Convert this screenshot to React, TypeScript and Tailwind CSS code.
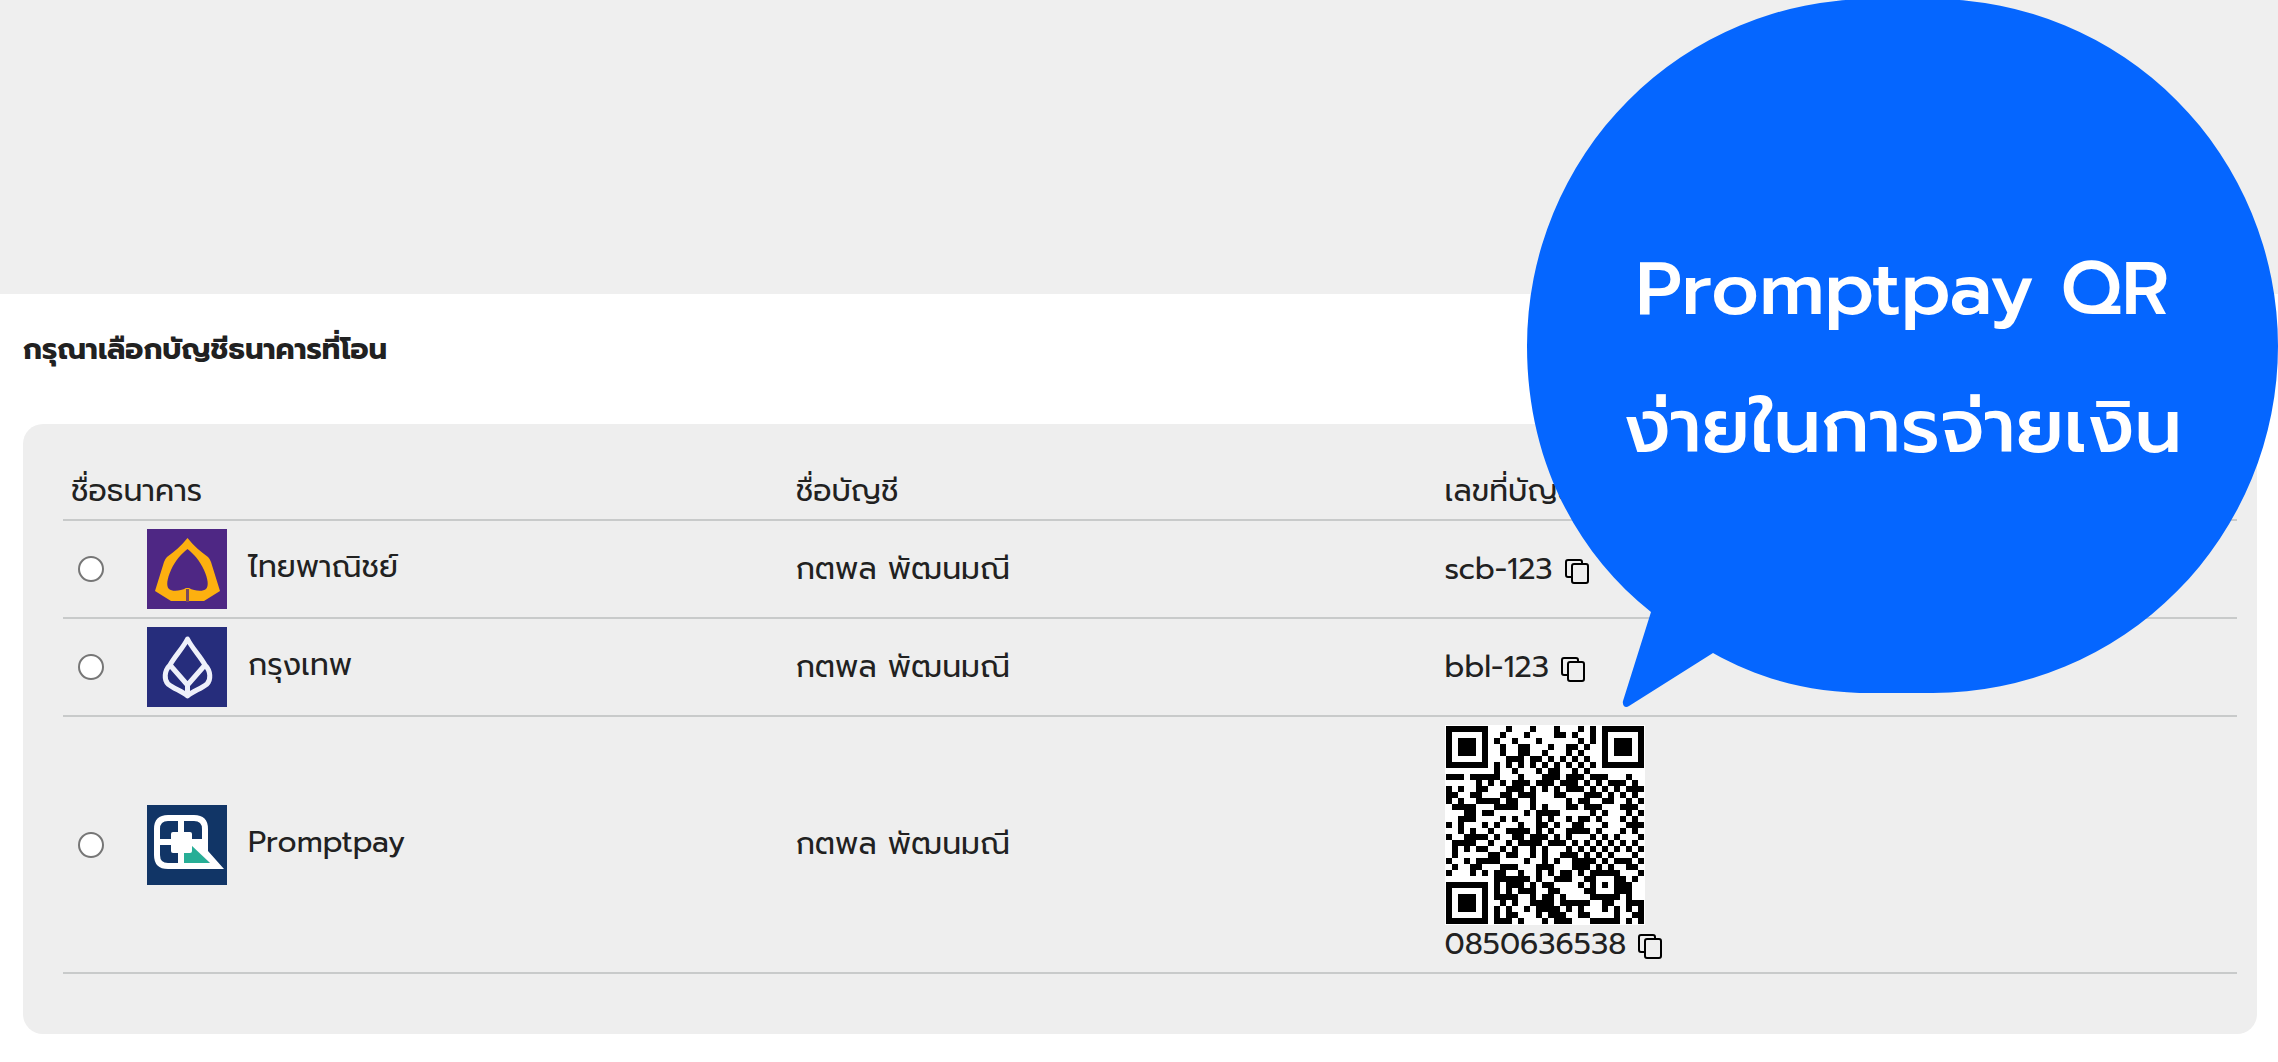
import type { ReactNode } from "react";

// ── PromptPay payload (EMVCo) ──
const crc16 = (text: string) => {
  let crc = 0xffff;
  for (const ch of text) {
    crc ^= ch.charCodeAt(0) << 8;
    for (let i = 0; i < 8; i++) {
      crc = crc & 0x8000 ? ((crc << 1) ^ 0x1021) & 0xffff : (crc << 1) & 0xffff;
    }
  }
  return crc.toString(16).toUpperCase().padStart(4, "0");
};

const promptpayPayload = (phone: string, amount: string) => {
  const target = "0066" + phone.slice(1);
  const size = String(amount.length).padStart(2, "0");
  const body = `00020101021229370016A0000006770101110113${target}5802TH530376454${size}${amount}6304`;
  return body + crc16(body);
};

// ── QR code, version 4-L, alphanumeric mode ──
const SIZE = 33;
const DATA_WORDS = 80;
const ECC_WORDS = 20;
const ALPHANUMERIC = "0123456789ABCDEFGHIJKLMNOPQRSTUVWXYZ $%*+-./:";

const gfMul = (a: number, b: number) => {
  let r = 0;
  for (let i = 7; i >= 0; i--) {
    r = (r << 1) ^ ((r >>> 7) * 0x11d);
    if ((b >>> i) & 1) r ^= a;
  }
  return r;
};

const eccFor = (data: number[]) => {
  const gen: number[] = new Array(ECC_WORDS).fill(0);
  gen[ECC_WORDS - 1] = 1;
  let root = 1;
  for (let i = 0; i < ECC_WORDS; i++) {
    for (let j = 0; j < ECC_WORDS; j++) {
      gen[j] = gfMul(gen[j], root);
      if (j + 1 < ECC_WORDS) gen[j] ^= gen[j + 1];
    }
    root = gfMul(root, 2);
  }
  const rem: number[] = new Array(ECC_WORDS).fill(0);
  for (const b of data) {
    const factor = b ^ rem.shift()!;
    rem.push(0);
    gen.forEach((g, i) => (rem[i] ^= gfMul(g, factor)));
  }
  return rem;
};

const makeQr = (text: string) => {
  const bits: number[] = [];
  const push = (value: number, len: number) => {
    for (let i = len - 1; i >= 0; i--) bits.push((value >>> i) & 1);
  };
  push(2, 4);
  push(text.length, 9);
  for (let i = 0; i < text.length; i += 2) {
    const a = ALPHANUMERIC.indexOf(text[i]);
    if (i + 1 < text.length) push(a * 45 + ALPHANUMERIC.indexOf(text[i + 1]), 11);
    else push(a, 6);
  }
  push(0, 4);
  while (bits.length % 8) bits.push(0);

  const data: number[] = [];
  for (let i = 0; i < bits.length; i += 8) {
    data.push(parseInt(bits.slice(i, i + 8).join(""), 2));
  }
  for (let pad = 0xec; data.length < DATA_WORDS; pad ^= 0xfd) data.push(pad);
  const words = [...data, ...eccFor(data)];

  const grid: number[][] = Array.from({ length: SIZE }, () => new Array(SIZE).fill(-1));

  // timing lines
  for (let i = 0; i < SIZE; i++) {
    grid[6][i] = grid[i][6] = i % 2 === 0 ? 1 : 0;
  }
  // finders with their separators
  for (const [cy, cx] of [[3, 3], [3, SIZE - 4], [SIZE - 4, 3]]) {
    for (let dy = -4; dy <= 4; dy++) {
      for (let dx = -4; dx <= 4; dx++) {
        const y = cy + dy;
        const x = cx + dx;
        if (y < 0 || x < 0 || y >= SIZE || x >= SIZE) continue;
        const d = Math.max(Math.abs(dx), Math.abs(dy));
        grid[y][x] = d === 2 || d === 4 ? 0 : 1;
      }
    }
  }
  // alignment
  for (let dy = -2; dy <= 2; dy++) {
    for (let dx = -2; dx <= 2; dx++) {
      grid[26 + dy][26 + dx] = Math.max(Math.abs(dx), Math.abs(dy)) === 1 ? 0 : 1;
    }
  }
  // format bits for level L, mask 0
  const format = 0b111011111000100;
  const f = (i: number) => (format >>> i) & 1;
  for (let i = 0; i <= 5; i++) grid[i][8] = f(i);
  grid[7][8] = f(6);
  grid[8][8] = f(7);
  grid[8][7] = f(8);
  for (let i = 9; i < 15; i++) grid[8][14 - i] = f(i);
  for (let i = 0; i < 8; i++) grid[8][SIZE - 1 - i] = f(i);
  for (let i = 8; i < 15; i++) grid[SIZE - 15 + i][8] = f(i);
  grid[SIZE - 8][8] = 1;

  // zigzag data
  let n = 0;
  for (let right = SIZE - 1; right >= 1; right -= 2) {
    if (right === 6) right = 5;
    for (let v = 0; v < SIZE; v++) {
      for (let j = 0; j < 2; j++) {
        const x = right - j;
        const y = ((right + 1) & 2) === 0 ? SIZE - 1 - v : v;
        if (grid[y][x] !== -1) continue;
        const bit = n < words.length * 8 ? (words[n >>> 3] >>> (7 - (n & 7))) & 1 : 0;
        grid[y][x] = (x + y) % 2 === 0 ? bit ^ 1 : bit;
        n++;
      }
    }
  }
  return grid;
};

const QrCode = ({ value }: { value: string }) => {
  const path = makeQr(value)
    .flatMap((row, y) => row.map((on, x) => (on ? `M${x * 6 + 1} ${y * 6 + 1}h6v6h-6z` : "")))
    .join("");
  return (
    <svg viewBox="0 0 200 200" className="block size-[200px]" role="img" aria-label="Promptpay QR">
      <rect width="200" height="200" fill="#fff" />
      <path d={path} fill="#000" shapeRendering="crispEdges" />
    </svg>
  );
};

// ── Logos ──
const ScbLogo = () => (
  <svg viewBox="0 0 80 80" className="size-20 shrink-0" aria-hidden="true">
    <rect width="80" height="80" fill="#4e2784" />
    <path
      fill="#fdb00f"
      fillRule="evenodd"
      d="M40.500 9C47 17 54 23 61 28Q63 30 64 33L73 62L57 72H24L8 62L17 33Q18 30 20 28C27 23 34 17 40.500 9ZM40.500 20C34 25 28 32 24 41C20 50 19 57 22 60C25 63 34 62 39 59H42C47 62 56 63 59 60C62 57 61 50 57 41C53 32 47 25 40.500 20Z"
    />
    <path d="M40.500 60V73" stroke="#7a4a5c" strokeWidth="3" />
  </svg>
);

const BblLogo = () => (
  <svg viewBox="0 0 80 80" className="size-20 shrink-0" aria-hidden="true">
    <rect width="80" height="80" fill="#262d7c" />
    <g fill="none" stroke="#eef0fa" strokeWidth="5" strokeLinejoin="round">
      <path d="M40.500 12C36 21 28 29 23 38C17 44 17 53 21 57C27 62 35 64 40.500 69C46 64 54 62 60 57C64 53 64 44 58 38C53 29 45 21 40.500 12Z" />
      <path d="M23 38L40.500 58L58 38M40.500 57V69" />
    </g>
  </svg>
);

const PromptpayLogo = () => (
  <svg viewBox="0 0 80 80" className="size-20 shrink-0" aria-hidden="true">
    <rect width="80" height="80" fill="#113566" />
    <path
      d="M58 36V24Q58 13 47 13H21Q10 13 10 24V50Q10 61 21 61H40"
      fill="none"
      stroke="#fff"
      strokeWidth="6"
    />
    <path d="M34 13V61M10 37H46" stroke="#fff" strokeWidth="6" />
    <path d="M37 40H45L63 58H37Z" fill="#27ae96" />
    <path d="M44 34H61V46L77 64H36V58H63L44 40Z" fill="#fff" />
    <rect x="24" y="27" width="21" height="21" rx="2" fill="#fff" />
  </svg>
);

const CopyIcon = () => (
  <svg viewBox="0 0 24 25" className="h-[25px] w-6" fill="none" stroke="#000" strokeWidth="2" aria-hidden="true">
    <path d="M6 18H3Q1 18 1 16V3Q1 1 3 1H15Q17 1 17 3V4" />
    <rect x="7" y="5" width="16" height="19" rx="2" />
  </svg>
);

interface Account {
  id: string;
  bank: string;
  logo: ReactNode;
  name: string;
  number: string;
  amount?: string;
}

const ACCOUNTS: Account[] = [
  { id: "scb", bank: "ไทยพาณิชย์", logo: <ScbLogo />, name: "กตพล พัฒนมณี", number: "scb-123" },
  { id: "bbl", bank: "กรุงเทพ", logo: <BblLogo />, name: "กตพล พัฒนมณี", number: "bbl-123" },
  { id: "promptpay", bank: "Promptpay", logo: <PromptpayLogo />, name: "กตพล พัฒนมณี", number: "0850636538", amount: "61.10" },
];

const App = () => {
  const handleCopy = (number: string) => {
    navigator.clipboard?.writeText(number);
  };

  return (
    <div className="relative overflow-x-hidden bg-white font-['Prompt','Inter',sans-serif] text-[#212121]">
      <div className="h-[294px] bg-[#efefef]" />

      <main className="pt-[35px] pr-[21px] pb-7 pl-[23px]">
        <h1 className="text-[29px] leading-10 font-bold">กรุณาเลือกบัญชีธนาคารที่โอน</h1>

        <div className="mt-[55px] rounded-[20px] bg-[#eeeeee] pt-10 pr-5 pb-[60px] pl-10">
          <table className="w-full table-fixed border-collapse text-left text-[30px] leading-[39px]">
            <thead>
              <tr className="border-b-2 border-[#c8caca]">
                <th scope="col" className="w-1/3 p-2 font-normal">ชื่อธนาคาร</th>
                <th scope="col" className="w-[29.85%] p-2 font-normal">ชื่อบัญชี</th>
                <th scope="col" className="p-2 font-normal">เลขที่บัญชี</th>
              </tr>
            </thead>
            <tbody>
              {ACCOUNTS.map((account) => (
                <tr key={account.id} className="border-b-2 border-[#c8caca]">
                  <td className="p-2">
                    <div className="flex items-center">
                      <input
                        id={account.id}
                        type="radio"
                        name="account"
                        className="ml-[7px] size-[26px] appearance-none rounded-full border-2 border-[#767676] bg-white checked:border-[7px]"
                      />
                      <label htmlFor={account.id} className="ml-[43px] flex items-center gap-[21px]">
                        {account.logo}
                        <span className="pb-1">{account.bank}</span>
                      </label>
                    </div>
                  </td>
                  <td className="p-2">{account.name}</td>
                  <td className="p-2">
                    {account.amount && <QrCode value={promptpayPayload(account.number, account.amount)} />}
                    <div className="flex items-center gap-3">
                      {account.number}
                      <button
                        type="button"
                        aria-label="Copy"
                        className="mt-1 cursor-pointer"
                        onClick={() => handleCopy(account.number)}
                      >
                        <CopyIcon />
                      </button>
                    </div>
                  </td>
                </tr>
              ))}
            </tbody>
          </table>
        </div>
      </main>

      {/* Bubble over the top right corner */}
      <div className="absolute top-0 right-0 h-[708px] w-[751px] text-center text-[75px] font-medium text-white">
        <svg viewBox="0 0 751 708" className="absolute inset-0 size-full" aria-hidden="true">
          <path
            fill="#0566ff"
            d="M345 -1H406A345 347 0 0 1 406 693H345C285 693 234 680 186 653L102 706C98 709 95 705 96 701L124 612C46 550 0 456 0 346A345 347 0 0 1 345 -1Z"
          />
        </svg>
        <div className="relative pt-[220px] leading-[138px]">
          <p>Promptpay QR</p>
          <p>ง่ายในการจ่ายเงิน</p>
        </div>
      </div>
    </div>
  );
};

export default App;
